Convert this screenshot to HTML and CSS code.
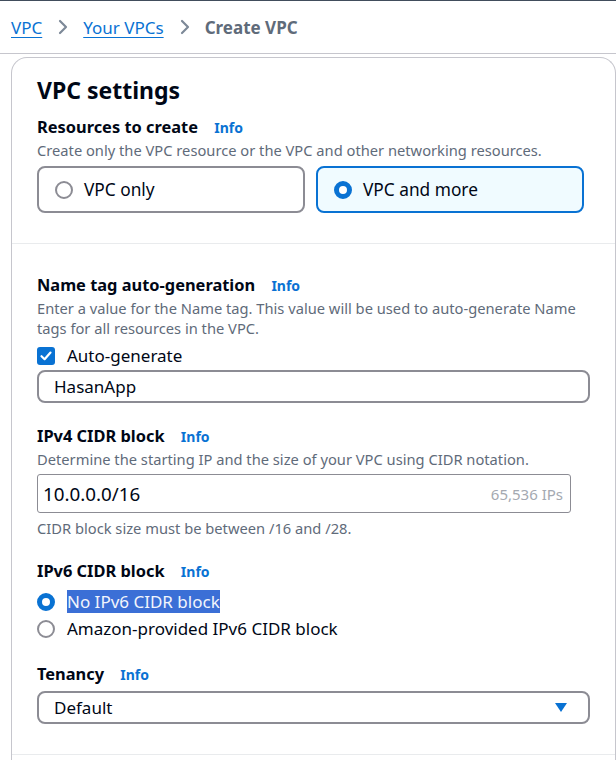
FILE: index.html
```html
<!DOCTYPE html>
<html>
<head>
<meta charset="utf-8">
<link rel="stylesheet" href="styles.css">
</head>
<body>
<div class="topline"></div>
<nav class="crumbs">
  <a class="crumb-link" href="#">VPC</a>
  <svg class="chev" width="12" height="16" viewBox="0 0 12 16"><path d="M3 2 L9 8 L3 14" fill="none" stroke="#7d8998" stroke-width="2.2" stroke-linecap="round" stroke-linejoin="round"/></svg>
  <a class="crumb-link" href="#">Your VPCs</a>
  <svg class="chev" width="12" height="16" viewBox="0 0 12 16"><path d="M3 2 L9 8 L3 14" fill="none" stroke="#7d8998" stroke-width="2.2" stroke-linecap="round" stroke-linejoin="round"/></svg>
  <span class="crumb-current">Create VPC</span>
</nav>
<main class="card">
  <section class="sec sec-first">
    <h2 class="title">VPC settings</h2>
    <div class="label">Resources to create <a class="info" href="#">Info</a></div>
    <div class="desc">Create only the VPC resource or the VPC and other networking resources.</div>
    <div class="tiles">
      <div class="tile"><span class="radio"></span><span class="tile-text">VPC only</span></div>
      <div class="tile tile-on"><span class="radio radio-on"></span><span class="tile-text">VPC and more</span></div>
    </div>
  </section>
  <section class="sec">
    <div class="label">Name tag auto-generation <a class="info" href="#">Info</a></div>
    <div class="desc desc-wrap">Enter a value for the Name tag. This value will be used to auto-generate Name tags for all resources in the VPC.</div>
    <div class="check-row">
      <span class="checkbox"><svg width="14" height="14" viewBox="0 0 14 14"><path d="M2.5 7.2 L5.6 10.2 L11.5 3.6" fill="none" stroke="#fff" stroke-width="2.2" stroke-linecap="round" stroke-linejoin="round"/></svg></span>
      <span class="opt-text">Auto-generate</span>
    </div>
    <div class="input input-round">HasanApp</div>

    <div class="label label-gap">IPv4 CIDR block <a class="info" href="#">Info</a></div>
    <div class="desc">Determine the starting IP and the size of your VPC using CIDR notation.</div>
    <div class="input input-cidr"><span class="cidr-val">10.0.0.0/16</span><span class="ips">65,536 IPs</span></div>
    <div class="desc helper">CIDR block size must be between /16 and /28.</div>

    <div class="label label-gap">IPv6 CIDR block <a class="info" href="#">Info</a></div>
    <div class="radios">
      <div class="radio-row"><span class="radio radio-on"></span><span class="opt-text"><span class="sel">No IPv6 CIDR block</span></span></div>
      <div class="radio-row"><span class="radio"></span><span class="opt-text">Amazon-provided IPv6 CIDR block</span></div>
    </div>

    <div class="label label-gap">Tenancy <a class="info" href="#">Info</a></div>
    <div class="input input-round select">
      <span>Default</span>
      <svg width="14" height="11" viewBox="0 0 14 11"><path d="M1 1 L13 1 L7 10 Z" fill="#0972d3"/></svg>
    </div>
  </section>
  <div class="divider-bottom"></div>
</main>
</body>
</html>
```
FILE: styles.css
```css
html, body {
  margin: 0;
  padding: 0;
  background: #ffffff;
}
body {
  font-family: "Noto Sans", "Open Sans", sans-serif;
  color: #000716;
  width: 616px;
  height: 760px;
  overflow: hidden;
}
.topline {
  height: 1px;
  background: #414d5c;
}
.crumbs {
  height: 52px;
  border-bottom: 1px solid #c6c6cd;
  display: flex;
  align-items: center;
  padding-left: 11px;
  font-size: 17px;
}
.crumb-link {
  color: #0972d3;
  text-decoration: underline;
  text-underline-offset: 3px;
}
.chev {
  margin: 0 14px 0 15px;
}
.crumb-current {
  color: #5f6b7a;
  font-weight: 700;
}
.card {
  margin: 3px 0 0 11px;
  border: 1px solid #c6c6cd;
  border-bottom: none;
  border-radius: 16px 16px 0 0;
  height: 720px;
}
.sec {
  padding: 30px 25px 30px 25px;
  border-bottom: 1px solid #e9ebed;
}
.sec-first {
  padding-top: 17px;
}
.title {
  margin: 0;
  font-size: 23px;
  font-weight: 700;
  line-height: 30px;
}
.label {
  font-size: 16.4px;
  font-weight: 700;
  line-height: 22px;
  margin-top: 11px;
}
.sec > .label:first-child {
  margin-top: 0;
}
.label-gap {
  margin-top: 22px;
}
.info {
  color: #0972d3;
  font-size: 14px;
  text-decoration: none;
  margin-left: 12px;
}
.desc {
  font-size: 14.7px;
  line-height: 20px;
  color: #5f6b7a;
  margin-top: 1px;
}
.desc-wrap {
  width: 552px;
}
.helper {
  margin-top: 5px;
}
.tiles {
  display: grid;
  grid-template-columns: 268px 268px;
  gap: 11px;
  margin-top: 6px;
}
.tile {
  height: 47px;
  box-sizing: border-box;
  border: 2px solid #8c8c94;
  border-radius: 8px;
  display: flex;
  align-items: center;
  padding-left: 16px;
}
.tile-on {
  border-color: #0972d3;
  background: #f0fbff;
}
.tile-text {
  font-size: 17.3px;
  margin-left: 11px;
}
.radio {
  width: 18px;
  height: 18px;
  box-sizing: border-box;
  border: 2px solid #8c8c94;
  border-radius: 50%;
  display: inline-block;
  flex: none;
  background: #fff;
}
.radio-on {
  border: 5px solid #0972d3;
}
.check-row {
  display: flex;
  align-items: center;
  height: 20px;
  margin-top: 8px;
}
.checkbox {
  width: 18px;
  height: 18px;
  border-radius: 3px;
  background: #0972d3;
  display: flex;
  align-items: center;
  justify-content: center;
  flex: none;
}
.opt-text {
  font-size: 17px;
  margin-left: 12px;
  line-height: 22px;
}
.input {
  margin-top: 4px;
  box-sizing: border-box;
  font-size: 17px;
  display: flex;
  align-items: center;
}
.input-round {
  width: 553px;
  height: 33px;
  border: 2px solid #8c8c94;
  border-radius: 8px;
  padding-left: 15px;
}
.input-cidr {
  margin-top: 5px;
  width: 534px;
  height: 39px;
  border: 1px solid #8c8c94;
  border-radius: 3px;
  padding: 0 7px 0 5px;
  justify-content: space-between;
}
.cidr-val {
  font-size: 18.8px;
}
.ips {
  color: #a4a9b1;
  font-size: 15px;
}
.radios {
  margin-top: 7px;
  display: flex;
  flex-direction: column;
  gap: 3px;
}
.radio-row {
  display: flex;
  align-items: center;
  height: 24px;
}
.sel {
  background: #3b6fd6;
  color: #f2f5fc;
}
.select {
  margin-top: 5px;
  justify-content: space-between;
  padding-right: 20px;
}
```
